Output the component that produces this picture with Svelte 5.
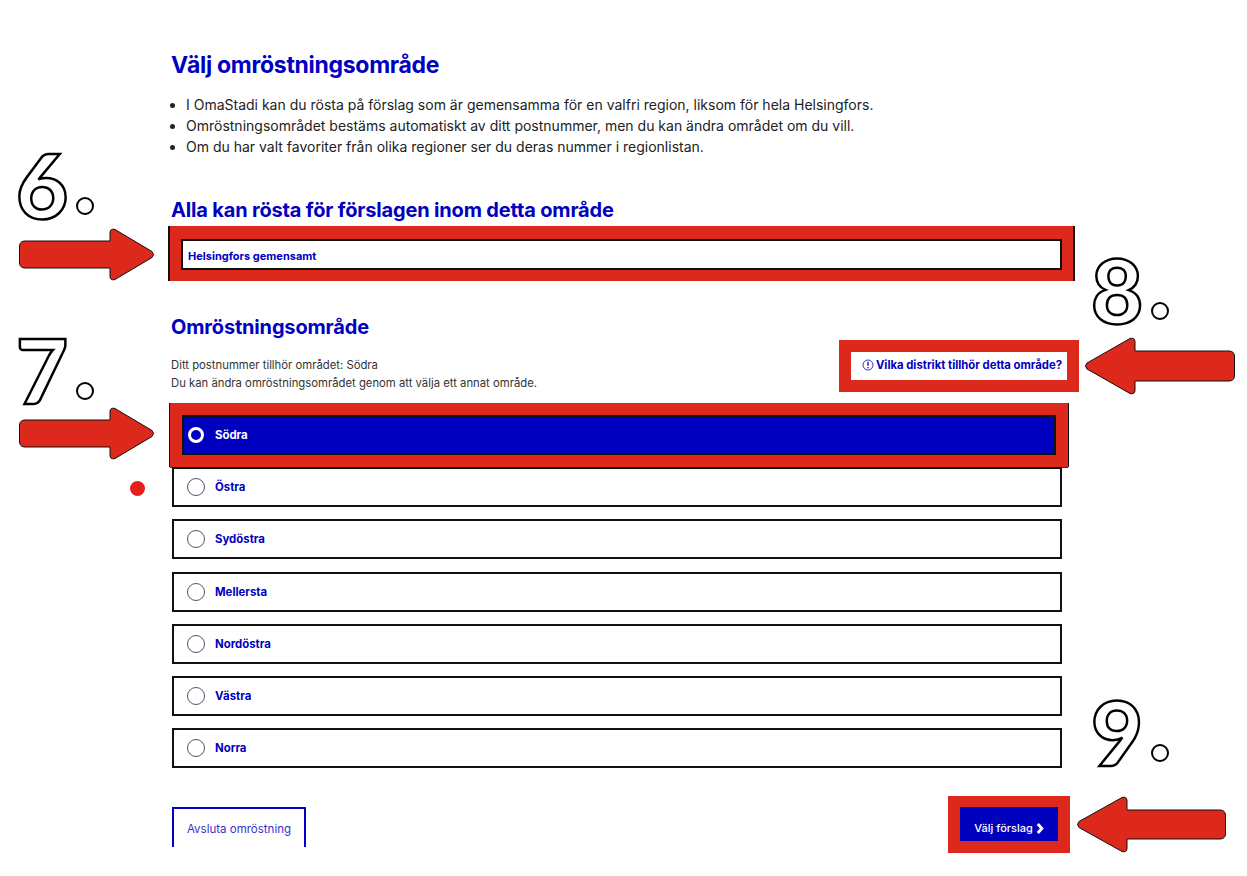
<script>
	const areas = ['Södra', 'Östra', 'Sydöstra', 'Mellersta', 'Nordöstra', 'Västra', 'Norra'];
	const notes = [
		{ n: '6', x: 16, y: 139 },
		{ n: '7', x: 16, y: 324 },
		{ n: '8', x: 1091, y: 244 },
		{ n: '9', x: 1091, y: 686 }
	];
	const arrows = [
		{ x: 19, y: 228, w: 136, h: 53, head: 45, flip: false },
		{ x: 19, y: 407, w: 136, h: 53, head: 45, flip: false },
		{ x: 1084, y: 337, w: 151, h: 58, head: 51, flip: true },
		{ x: 1076, y: 796, w: 150, h: 57, head: 51, flip: true }
	];
	let selected = 'Södra';

	function arrowPath(w, h, head) {
		const base = w - head;
		const inset = Math.round(h * 0.24);
		const mid = h / 2;
		return `M6 ${inset}H${base}V5Q${base} 0 ${base + 5} 1.500L${w - 3} ${mid - 3}Q${w} ${mid} ${w - 3} ${mid + 3}L${base + 5} ${h - 1.5}Q${base} ${h} ${base} ${h - 5}V${h - inset}H6Q1 ${h - inset} 0.500 ${h - inset - 5}V${inset + 5}Q1 ${inset} 6 ${inset}Z`;
	}
</script>

<div class="page">
	<h1>Välj omröstningsområde</h1>
	<ul>
		<li>I OmaStadi kan du rösta på förslag som är gemensamma för en valfri region, liksom för hela Helsingfors.</li>
		<li>Omröstningsområdet bestäms automatiskt av ditt postnummer, men du kan ändra området om du vill.</li>
		<li>Om du har valt favoriter från olika regioner ser du deras nummer i regionlistan.</li>
	</ul>

	<h2 class="first">Alla kan rösta för förslagen inom detta område</h2>
	<div class="common-frame">
		<div class="common">Helsingfors gemensamt</div>
	</div>

	<h2 class="second">Omröstningsområde</h2>
	<div class="intro">
		<p>Ditt postnummer tillhör området: Södra<br />Du kan ändra omröstningsområdet genom att välja ett annat område.</p>
		<div class="info-frame">
			<div class="info">
				<svg viewBox="0 0 12 12" width="12" height="12" aria-hidden="true">
					<circle cx="6" cy="6" r="5" fill="none" stroke="currentColor" stroke-width="0.8" />
					<path d="M6 2.800v3.900M6 7.900v1.300" stroke="currentColor" stroke-width="1.300" fill="none" />
				</svg>
				<span>Vilka distrikt tillhör detta område?</span>
			</div>
		</div>
	</div>

	<div class="options">
		{#each areas as area}
			<div class="option" class:selected={area === selected}>
				<span class="radio"></span>
				<span>{area}</span>
			</div>
		{/each}
	</div>

	<div class="actions">
		<div class="quit">Avsluta omröstning</div>
		<div class="next-frame">
			<div class="next">
				Välj förslag
				<svg viewBox="0 0 8 12" width="8" height="11" aria-hidden="true">
					<path d="M1.600 1.200 6 6l-4.400 4.800" fill="none" stroke="currentColor" stroke-width="3.200" />
				</svg>
			</div>
		</div>
	</div>

	{#each notes as note}
		<span class="note" style="left: {note.x}px; top: {note.y}px">{note.n}<span class="period"></span></span>
	{/each}
	{#each arrows as a}
		<svg class="arrow" style="left: {a.x}px; top: {a.y}px" width={a.w} height={a.h} viewBox="0 0 {a.w} {a.h}" aria-hidden="true">
			<path
				transform={a.flip ? `translate(${a.w} 0) scale(-1 1)` : undefined}
				d={arrowPath(a.w, a.h, a.head)}
				fill="#dc291b"
				stroke="#111"
				stroke-width="1"
			/>
		</svg>
	{/each}
	<span class="dot"></span>
</div>

<style>
	:global(body) {
		background: #fff;
	}

	.page {
		position: relative;
		box-sizing: border-box;
		width: 1247px;
		height: 876px;
		padding: 50px 0 0 171px;
		overflow: hidden;
		font-family: Inter, "Liberation Sans", sans-serif;
		color: #222;
	}

	h1,
	h2 {
		margin: 0;
		font-weight: 700;
		color: #0000bf;
	}

	h1 {
		font-size: 23px;
		line-height: 30px;
		letter-spacing: -0.300px;
	}

	h2 {
		font-size: 20px;
		line-height: 26px;
		letter-spacing: -0.170px;
	}

	h2.first {
		margin-top: 40px;
	}

	h2.second {
		margin-top: 33px;
	}

	ul {
		margin: 14px 0 0;
		padding: 0 0 0 15px;
		font-size: 14px;
		line-height: 21px;
	}

	.common-frame {
		box-sizing: border-box;
		width: 907px;
		height: 55px;
		margin: 3px 0 0 -3px;
		padding: 13px 11px 11px;
		background: #dc291b;
		border: solid #111;
		border-width: 0 2px;
	}

	.common {
		box-sizing: border-box;
		height: 31px;
		padding-left: 5px;
		border: 2px solid #111;
		background: #fff;
		color: #0000bf;
		font-size: 11px;
		font-weight: 700;
		line-height: 30px;
	}

	.intro {
		display: flex;
		justify-content: space-between;
		width: 908px;
		margin-top: 0;
	}

	.intro p {
		margin: 16px 0 0;
		color: #333;
		font-size: 11.300px;
		line-height: 18px;
	}

	.info-frame {
		box-sizing: border-box;
		width: 240px;
		height: 52px;
		padding: 12px;
		background: #dc291b;
	}

	.info {
		display: flex;
		align-items: center;
		justify-content: flex-end;
		gap: 2px;
		box-sizing: border-box;
		height: 28px;
		padding: 0 5px 3px 0;
		background: #fff;
		color: #0000bf;
		font-size: 11.300px;
		font-weight: 700;
	}

	.options {
		display: flex;
		flex-direction: column;
		gap: 12.200px;
		width: 890px;
		margin: 23px 0 0 1px;
	}

	.option {
		display: flex;
		align-items: center;
		gap: 10px;
		box-sizing: border-box;
		height: 40px;
		padding-left: 13px;
		border: 2px solid #111;
		background: #fff;
		color: #0000bf;
		font-size: 11.400px;
		font-weight: 700;
	}

	.radio {
		box-sizing: border-box;
		width: 18px;
		height: 18px;
		border: 1.500px solid #50556a;
		border-radius: 50%;
		background: #fff;
	}

	.option.selected {
		width: 874px;
		margin-left: 10px;
		padding-left: 4px;
		gap: 11px;
		background: #0000bf;
		color: #fff;
		outline: 12px solid #dc291b;
		box-shadow: -1px 0 0 12px #111, 1px 0 0 12px #111, 0 1px 0 12px #333;
	}

	.option.selected .radio {
		width: 16px;
		height: 16px;
		border: 3.500px solid #fff;
		background: transparent;
	}

	.actions {
		display: flex;
		justify-content: space-between;
		align-items: flex-start;
		width: 898px;
		margin: 39px 0 0 1px;
	}

	.quit {
		box-sizing: border-box;
		width: 134px;
		height: 40px;
		border: 2px solid #0000bf;
		border-bottom: 0;
		color: #3333cc;
		font-size: 11.500px;
		line-height: 41px;
		text-align: center;
	}

	.next-frame {
		box-sizing: border-box;
		width: 122px;
		height: 57px;
		margin-top: -11px;
		padding: 11px 12px 12px;
		background: #dc291b;
	}

	.next {
		display: flex;
		align-items: center;
		justify-content: center;
		gap: 3px;
		box-sizing: border-box;
		height: 34px;
		padding-top: 8px;
		background: #0000bf;
		color: #fff;
		font-size: 11px;
		font-weight: 500;
	}

	.note {
		position: absolute;
		font-family: Lato, "Noto Sans", sans-serif;
		font-size: 90px;
		font-weight: 900;
		line-height: 90px;
		color: #fff;
		-webkit-text-stroke: 2.500px #000;
	}

	.period {
		position: absolute;
		left: 60px;
		bottom: 14px;
		box-sizing: border-box;
		width: 18px;
		height: 18px;
		border: 2.500px solid #000;
		border-radius: 50%;
		background: #fff;
	}

	.arrow {
		position: absolute;
		overflow: visible;
	}

	.dot {
		position: absolute;
		left: 130px;
		top: 481px;
		width: 15px;
		height: 15px;
		border-radius: 50%;
		background: #e61e1e;
	}
</style>
